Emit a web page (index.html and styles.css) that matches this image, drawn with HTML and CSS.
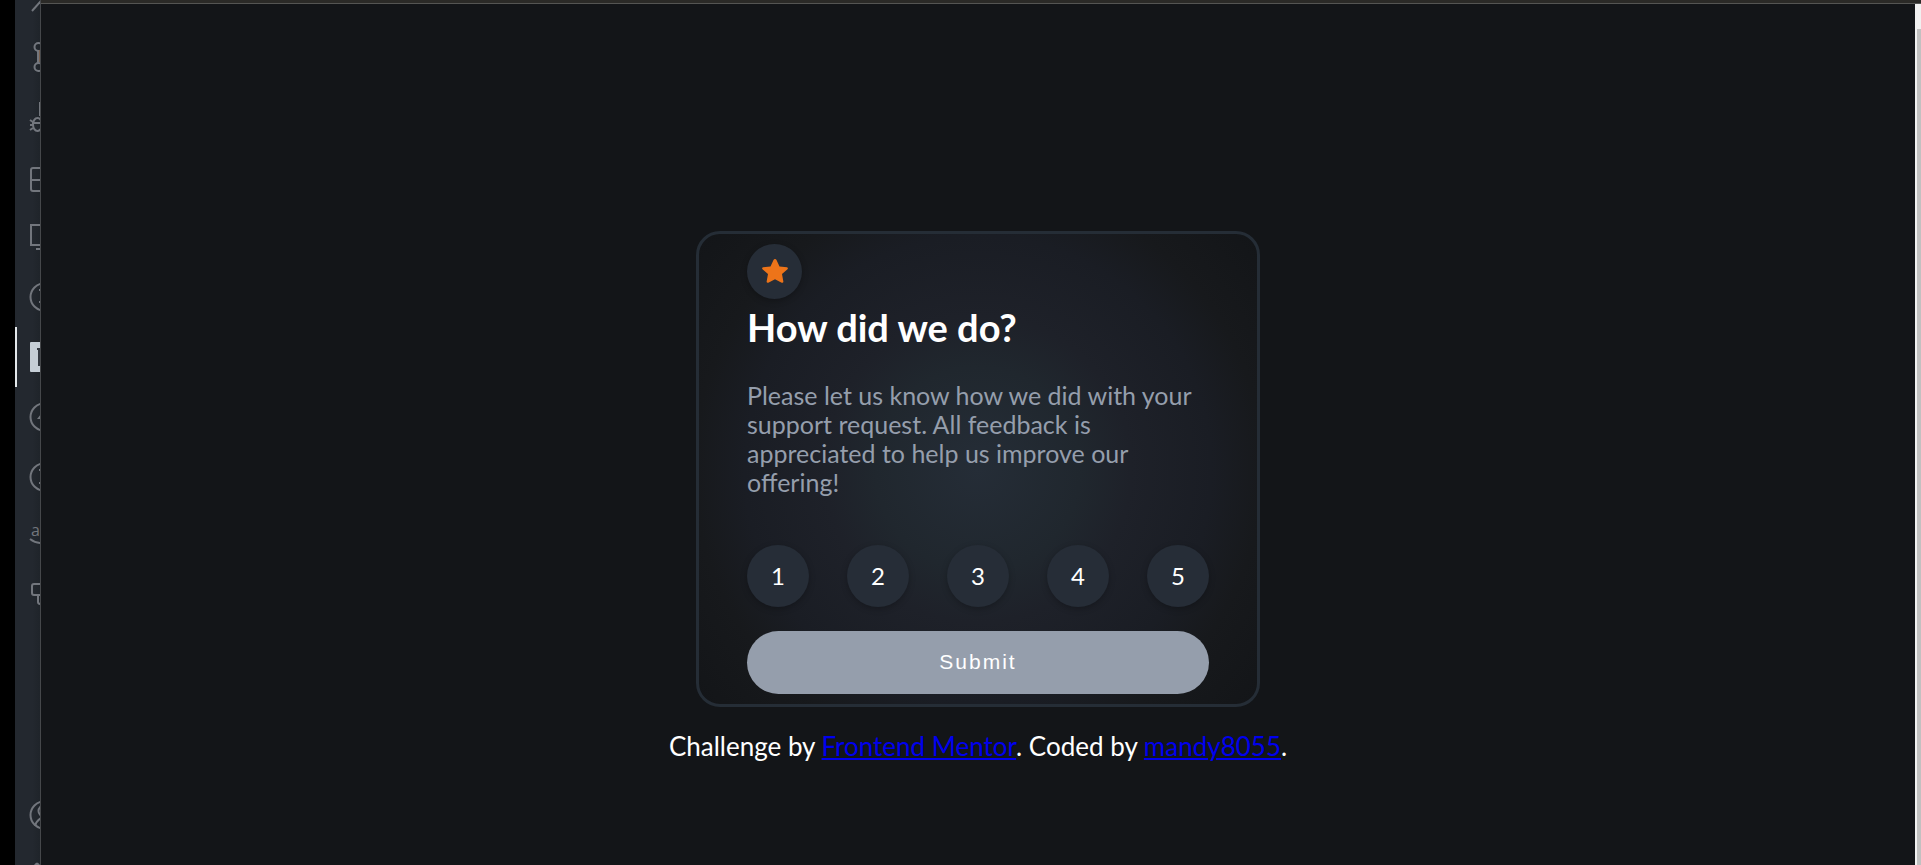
FILE: index.html
```
<!DOCTYPE html>
<html lang="en">
<head>
<meta charset="utf-8">
<title>Interactive rating component</title>
<link rel="stylesheet" href="styles.css">
</head>
<body>
<div class="window">
  <nav class="activity" aria-label="Activity bar">
    <svg class="tool" viewBox="0 0 25 60"><path d="M17 44L26 34"/></svg>
    <svg class="tool" viewBox="0 0 25 60"><circle cx="23.500" cy="20" r="4"/><circle cx="23.500" cy="40" r="4"/><path d="M23 24v12"/><path class="warm" d="M25 23v12"/></svg>
    <svg class="tool" viewBox="0 0 25 60"><path d="M25 15v14M17 36h8M15 33l3 2M15 38h3M15 43l3-2"/><ellipse cx="22.500" cy="37.500" rx="4.500" ry="6.500"/></svg>
    <svg class="tool" viewBox="0 0 25 60"><rect x="16" y="21" width="22" height="23" rx="2"/><path d="M16 33h10"/></svg>
    <svg class="tool" viewBox="0 0 25 60"><path d="M26 18H16v20h10M21 42h5"/></svg>
    <svg class="tool" viewBox="0 0 25 60"><circle cx="29" cy="30" r="13.500"/><path d="M25 22v2M25 34v2"/></svg>
    <svg class="tool" viewBox="0 0 25 60"><rect class="pointer" x="0" y="0" width="2" height="60"/><rect class="block" x="15" y="15" width="20" height="30" rx="1"/><path class="mark" d="M22 22h3M24 22v17"/></svg>
    <svg class="tool" viewBox="0 0 25 60"><circle cx="29" cy="30" r="13.500"/><path class="solid" d="M22 32l4-5v5z"/></svg>
    <svg class="tool" viewBox="0 0 25 60"><circle cx="29" cy="30" r="13.500"/><path d="M25 22v2M25 35v2"/></svg>
    <svg class="tool" viewBox="0 0 25 60"><text class="aws" x="16" y="29">aws</text><path d="M15 32q5 4 11 4"/></svg>
    <svg class="tool" viewBox="0 0 25 60"><path d="M26 17h-7q-2 0-2 2v7q0 2 2 2h7M23 28v7q0 2 3 2"/></svg>
    <span class="spacer"></span>
    <svg class="tool" viewBox="0 0 25 60"><circle cx="29" cy="30" r="13.500"/><circle cx="29" cy="26" r="5.500"/><path d="M20 41q1-5 6-8"/></svg>
    <svg class="tool" viewBox="0 0 25 60"><path class="solid" d="M19 20q3-5 6 0z"/></svg>
  </nav>
  <div class="preview">
    <div class="titlebar"></div>
    <div class="viewport">
      <main class="page">
        <form class="card">
          <span class="badge">
            <svg class="star" viewBox="0 0 26 24"><path d="M13 0q1 0 1.500 1l3 6.500 7.500.8q1.500.5.500 1.900L20 15l1.400 7.700q-.2 1.500-1.700 1L13 20.300 6.300 23.700q-1.500.5-1.700-1L6 15 .5 10.200q-1-1.400.5-1.900l7.500-.8 3-6.500Q12 0 13 0z"/></svg>
          </span>
          <h1 class="title">How did we do?</h1>
          <p class="text">Please let us know how we did with your support request. All feedback is appreciated to help us improve our offering!</p>
          <div class="ratings">
            <button class="rating" type="button">1</button>
            <button class="rating" type="button">2</button>
            <button class="rating" type="button">3</button>
            <button class="rating" type="button">4</button>
            <button class="rating" type="button">5</button>
          </div>
          <button class="submit" type="submit">Submit</button>
        </form>
        <footer class="credit">Challenge by <a href="#">Frontend Mentor</a>. Coded by <a href="#">mandy8055</a>.</footer>
      </main>
      <div class="scrollbar"><span class="thumb"></span></div>
    </div>
  </div>
</div>
</body>
</html>
```
FILE: styles.css
```
* { box-sizing: border-box; }
body {
  margin: 0;
  background: #000;
  color: #fff;
  font-family: Lato, "Open Sans", sans-serif;
}
.window {
  display: flex;
  height: 100vh;
  padding-left: 15px;
  overflow: hidden;
}
.activity {
  display: flex;
  flex-direction: column;
  flex: none;
  width: 25px;
  margin: -33px 0 -40px;
  background: linear-gradient(90deg, #23282f 70%, #1f242a);
}
.tool {
  flex: none;
  width: 25px;
  height: 60px;
  fill: none;
  stroke: #72767d;
  stroke-width: 2;
}
.tool .pointer { fill: #e3e8eb; stroke: none; }
.tool .block { fill: #c5ced6; stroke: none; }
.tool .mark { stroke: #343a42; }
.tool .solid { fill: #72767d; stroke: none; }
.tool .warm { stroke: #79604f; }
.aws {
  fill: #72767d;
  stroke: none;
  font: 16px "Open Sans", sans-serif;
}
.spacer { flex: 1; }
.preview {
  display: flex;
  flex-direction: column;
  flex: 1;
  border-left: 1px solid #45474a;
}
.titlebar {
  height: 4px;
  background: #2b2a27;
  border-bottom: 1px solid #555553;
}
.viewport { display: flex; flex: 1; }
.page {
  display: flex;
  flex-direction: column;
  align-items: center;
  justify-content: center;
  flex: 1;
  gap: 24px;
  padding-top: 122px;
  background: #131518;
}
.card {
  display: flex;
  flex-direction: column;
  width: 100%;
  max-width: 564px;
  padding: 10px 48px;
  border: 3px solid #252d36;
  border-radius: 24px;
  background: radial-gradient(circle, #252d37 0%, #20272e 28%, #1e2129 42%, #1a1d24 64%, #17191c 78%, #131518 100%);
}
.badge {
  display: grid;
  place-items: center;
  width: 55px;
  height: 55px;
  border-radius: 50%;
  background: #262d37;
  box-shadow: 0 2px 6px rgba(0, 0, 0, 0.25);
}
.star { width: 26px; height: 24px; fill: #ed7419; }
.title {
  margin: 6px 0 32px;
  font-size: 38px;
  line-height: 44px;
}
.text {
  margin: 0 0 48px;
  color: #959eac;
  font-size: 25px;
  line-height: 29px;
}
.ratings {
  display: flex;
  justify-content: space-between;
  margin-bottom: 24px;
}
.rating {
  width: 62px;
  height: 62px;
  padding: 0;
  border: 0;
  border-radius: 50%;
  background: #262d37;
  box-shadow: 0 2px 6px rgba(0, 0, 0, 0.25);
  color: #fff;
  font: 24px Lato, sans-serif;
}
.submit {
  height: 63px;
  padding: 0;
  border: 0;
  border-radius: 32px;
  background: #959eac;
  color: #fff;
  font: 21px "Liberation Sans", Arial, sans-serif;
  letter-spacing: 2px;
}
.credit {
  font-size: 26px;
  line-height: 30px;
  text-align: center;
}
.credit a { color: #0000ee; text-decoration: underline; }
.scrollbar {
  width: 6px;
  padding: 25px 0 0 2px;
  background: #f1f1f1;
}
.thumb { display: block; height: 100%; background: #c1c1c1; }
```
